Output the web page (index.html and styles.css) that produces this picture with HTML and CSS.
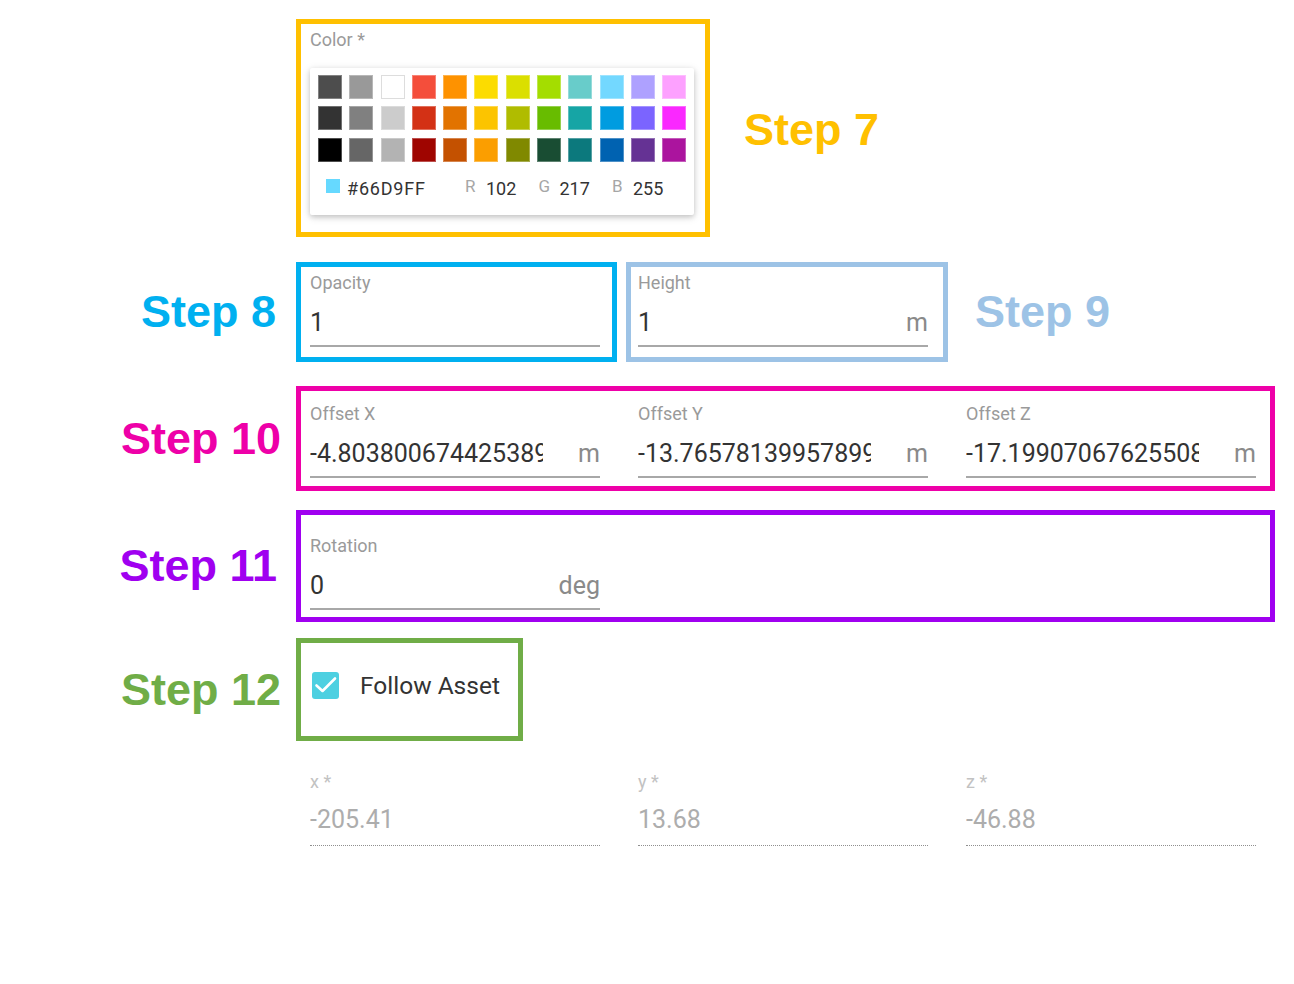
FILE: index.html
```html
<!DOCTYPE html>
<html lang="en">
<head>
    <meta charset="UTF-8">
    <meta name="viewport" content="width=device-width, initial-scale=1.0">
    <title>Marker Settings</title>
    <link rel="stylesheet" href="styles.css">
</head>
<body>

<div class="page">

    <div class="row row-color">
        <div class="step-col"></div>
        <div class="box box-yellow">
            <div class="field-label">Color *</div>
            <div class="picker">
                <div class="swatches" id="swatches"></div>
                <div class="picker-fields">
                    <span class="current"></span>
                    <span class="hex">#66D9FF</span>
                    <span class="rgb"><span class="rgb-label">R</span>102</span>
                    <span class="rgb"><span class="rgb-label">G</span>217</span>
                    <span class="rgb"><span class="rgb-label">B</span>255</span>
                </div>
            </div>
        </div>
        <div class="step step-7">Step 7</div>
    </div>

    <div class="row row-size">
        <div class="step-col"><span class="step step-8">Step 8</span></div>
        <div class="box box-blue">
            <div class="field">
                <div class="field-label">Opacity</div>
                <div class="field-input"><span class="field-value">1</span></div>
            </div>
        </div>
        <div class="box box-lightblue">
            <div class="field">
                <div class="field-label">Height</div>
                <div class="field-input"><span class="field-value">1</span><span class="field-unit">m</span></div>
            </div>
        </div>
        <div class="step step-9">Step 9</div>
    </div>

    <div class="row row-offset">
        <div class="step-col"><span class="step step-10">Step 10</span></div>
        <div class="box box-magenta">
            <div class="field-grid">
                <div class="field">
                    <div class="field-label">Offset X</div>
                    <div class="field-input"><span class="field-value">-4.803800674425389</span><span class="field-unit">m</span></div>
                </div>
                <div class="field">
                    <div class="field-label">Offset Y</div>
                    <div class="field-input"><span class="field-value">-13.765781399578993</span><span class="field-unit">m</span></div>
                </div>
                <div class="field">
                    <div class="field-label">Offset Z</div>
                    <div class="field-input"><span class="field-value">-17.199070676255083</span><span class="field-unit">m</span></div>
                </div>
            </div>
        </div>
    </div>

    <div class="row row-rotation">
        <div class="step-col"><span class="step step-11">Step 11</span></div>
        <div class="box box-purple">
            <div class="field-grid">
                <div class="field">
                    <div class="field-label">Rotation</div>
                    <div class="field-input"><span class="field-value">0</span><span class="field-unit">deg</span></div>
                </div>
            </div>
        </div>
    </div>

    <div class="row row-follow">
        <div class="step-col"><span class="step step-12">Step 12</span></div>
        <div class="box box-green">
            <label class="checkbox">
                <svg class="checkbox-icon" width="27" height="27" viewBox="0 0 27 27">
                    <rect x="0" y="0" width="27" height="27" rx="3" fill="#4dd0e1"/>
                    <path d="M4.5 13.5 L10.5 19 L23 6.5" fill="none" stroke="#fff" stroke-width="2.6" stroke-linecap="round" stroke-linejoin="round"/>
                </svg>
                <span>Follow Asset</span>
            </label>
        </div>
    </div>

    <div class="row row-position">
        <div class="step-col"></div>
        <div class="field-grid position-grid">
            <div class="field disabled">
                <div class="field-label">x *</div>
                <div class="field-input"><span class="field-value">-205.41</span></div>
            </div>
            <div class="field disabled">
                <div class="field-label">y *</div>
                <div class="field-input"><span class="field-value">13.68</span></div>
            </div>
            <div class="field disabled">
                <div class="field-label">z *</div>
                <div class="field-input"><span class="field-value">-46.88</span></div>
            </div>
        </div>
    </div>

</div>

<script>
    const swatchColors = [
        '#4D4D4D', '#999999', '#FFFFFF', '#F44E3B', '#FE9200', '#FCDC00', '#DBDF00', '#A4DD00', '#68CCCA', '#73D8FF', '#AEA1FF', '#FDA1FF',
        '#333333', '#808080', '#CCCCCC', '#D33115', '#E27300', '#FCC400', '#B0BC00', '#68BC00', '#16A5A5', '#009CE0', '#7B64FF', '#FA28FF',
        '#000000', '#666666', '#B3B3B3', '#9F0500', '#C45100', '#FB9E00', '#808900', '#194D33', '#0C797D', '#0062B1', '#653294', '#AB149E'
    ];

    const swatches = document.getElementById('swatches');

    swatchColors.forEach(color => {
        const swatch = document.createElement('div');
        swatch.className = color === '#FFFFFF' ? 'swatch swatch-white' : 'swatch';
        swatch.style.background = color;
        swatches.appendChild(swatch);
    });
</script>

</body>
</html>
```

FILE: styles.css
```css
body {
    margin: 0;
    padding: 0;
    background-color: white;
    color: #333;
    font-family: Roboto, "Liberation Sans", sans-serif;
}
.page {
    padding-top: 19px;
}
.row {
    display: flex;
    align-items: center;
}
.row-size {
    margin-top: 25px;
}
.row-offset {
    margin-top: 24px;
}
.row-rotation {
    margin-top: 19px;
}
.row-follow {
    margin-top: 16px;
}
.row-position {
    margin-top: 31px;
}
.step-col {
    width: 296px;
    flex-shrink: 0;
    box-sizing: border-box;
    padding-right: 15px;
    text-align: right;
}
.step {
    font-family: "Liberation Sans", Arial, sans-serif;
    font-weight: bold;
    font-size: 45px;
    line-height: 1;
}
.step-7 {
    color: #ffc000;
    margin-left: 34px;
    margin-top: 3px;
}
.step-8 {
    color: #00b0f0;
    margin-right: 5px;
}
.step-9 {
    color: #9dc3e6;
    margin-left: 27px;
}
.step-10 {
    color: #ee00a8;
}
.step-11 {
    color: #a000f0;
    margin-right: 4px;
}
.step-12 {
    color: #70ad47;
}

/* annotation boxes */
.box {
    border: 5px solid;
    box-sizing: border-box;
    background: white;
}
.box-yellow {
    border-color: #ffc000;
    padding: 6px 11px 17px 9px;
}
.box-blue {
    border-color: #00b0f0;
    padding: 6px 12px 10px 9px;
}
.box-lightblue {
    border-color: #9dc3e6;
    padding: 6px 15px 10px 7px;
    margin-left: 9px;
}
.box-magenta {
    border-color: #ee00a8;
    padding: 13px 14px 8px 9px;
}
.box-purple {
    border-color: #a000f0;
    padding: 21px 14px 7px 9px;
    width: 979px;
}
.box-green {
    border-color: #70ad47;
    padding: 28px 18px 36px 11px;
}

/* text fields */
.field-grid {
    display: grid;
    grid-template-columns: repeat(3, 290px);
    column-gap: 38px;
}
.position-grid {
    padding-left: 14px;
}
.field {
    width: 290px;
}
.field-label {
    font-size: 18px;
    line-height: 20px;
    color: #9a9a9a;
}
.field-input {
    display: flex;
    align-items: center;
    height: 32px;
    margin-top: 14px;
    padding-bottom: 6px;
    border-bottom: 2px solid #a8a8a8;
    font-size: 25px;
}
.field-value {
    flex: 1;
    min-width: 0;
    overflow: hidden;
    white-space: nowrap;
    color: #333;
}
.field-unit {
    margin-left: 35px;
    color: #8a8a8a;
}
.field.disabled .field-label {
    color: #c2c2c2;
}
.field.disabled .field-input {
    margin-top: 12px;
    padding-bottom: 9px;
    border-bottom: 1px dotted #8f8f8f;
}
.field.disabled .field-value {
    color: #adadad;
}

/* compact colour picker */
.picker {
    width: 384px;
    box-sizing: border-box;
    margin-top: 18px;
    padding: 7px 8px 14px;
    background: white;
    border-radius: 2px;
    box-shadow: 0 2px 10px rgba(0, 0, 0, 0.12), 0 2px 5px rgba(0, 0, 0, 0.16);
}
.swatches {
    display: grid;
    grid-template-columns: repeat(12, 24px);
    gap: 7.3px;
}
.swatch {
    height: 24px;
    box-shadow: inset 0 0 0 1px rgba(255, 255, 255, 0.3);
}
.swatch-white {
    box-shadow: inset 0 0 0 1px #dddddd;
}
.picker-fields {
    display: flex;
    align-items: center;
    height: 24px;
    margin-top: 15px;
    padding-left: 8px;
    font-size: 18px;
    color: #333;
}
.current {
    width: 14px;
    height: 14px;
    background: #66d9ff;
    margin-top: -6px;
}
.hex {
    width: 118px;
    margin-left: 7px;
    letter-spacing: 0.8px;
}
.rgb {
    width: 73.5px;
    display: flex;
    align-items: center;
}
.rgb-label {
    width: 21px;
    color: #a6a6a6;
    font-size: 17px;
    margin-top: -5px;
}

/* checkbox */
.checkbox {
    display: flex;
    align-items: center;
    font-size: 24.5px;
    color: #333;
}
.checkbox-icon {
    display: block;
    margin-right: 21px;
}
```
